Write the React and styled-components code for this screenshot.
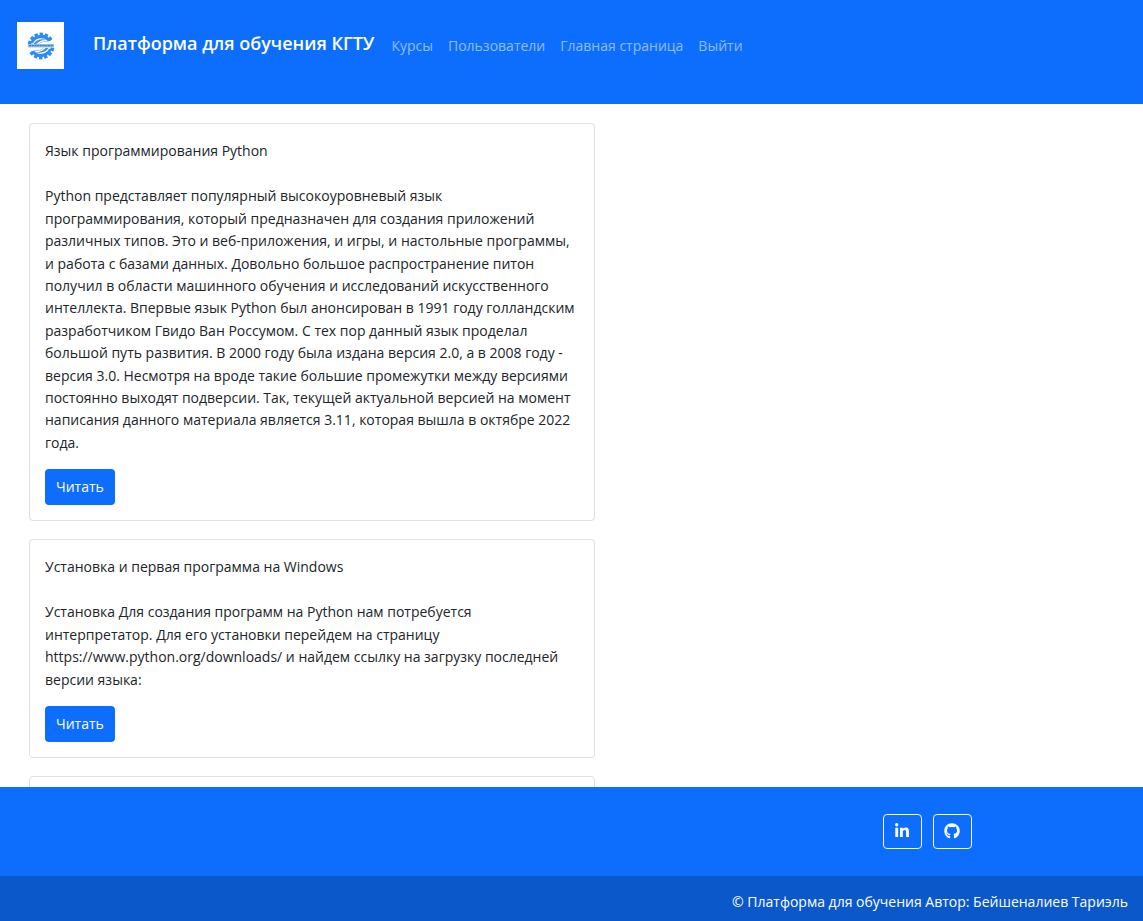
import React from "react";
import styled, { createGlobalStyle } from "styled-components";
import { FaLinkedinIn, FaGithub } from "react-icons/fa";

const GlobalStyle = createGlobalStyle`
  *, *::before, *::after { box-sizing: border-box; }
  body {
    margin: 0;
    background: #fff;
    color: #212529;
    font-family: "Segoe UI", "Open Sans", "Noto Sans", sans-serif;
    font-size: 14px;
    line-height: 1.6;
  }
  h1, h2, p { margin: 0; }
`;

const Page = styled.div`
  display: flex;
  flex-direction: column;
  height: 100vh;
`;

const Header = styled.header`
  display: flex;
  align-items: flex-start;
  padding: 22px 17px 35px;
  background: #0d6efd;
`;

const LogoLink = styled.a`
  display: flex;
  align-items: center;
  justify-content: center;
  width: 47px;
  height: 47px;
  margin-right: 29px;
  background: #fff;
`;

const Brand = styled.h1`
  margin-right: 17px;
  padding-top: 8px;
  color: #fff;
  font-size: 18px;
  font-weight: 600;
  line-height: 27px;
`;

const Nav = styled.nav`
  display: flex;
  gap: 15px;
  padding-top: 13px;
`;

const NavLink = styled.a`
  color: rgba(255, 255, 255, 0.55);
  text-decoration: none;
`;

const Main = styled.main`
  flex: 1;
  min-height: 0;
  overflow: hidden;
  padding: 19px 30px 0 29px;
`;

const CourseList = styled.div`
  display: flex;
  flex-direction: column;
  gap: 18px;
  width: calc(50% + 24px);
`;

const Card = styled.article`
  padding: 16px 15px 15px;
  border: 1px solid #dfdfdf;
  border-radius: 4px;
`;

const CardTitle = styled.h2`
  margin-bottom: 23px;
  font-size: 14px;
  font-weight: 400;
`;

const CardText = styled.p`
  margin-bottom: 15px;
`;

const ReadButton = styled.button`
  display: block;
  height: 36px;
  padding: 0 11px;
  border: 0;
  border-radius: 4px;
  background: #0d6efd;
  color: #fff;
  font: inherit;
  cursor: pointer;
`;

const Footer = styled.footer`
  background: #0d6efd;
  color: #fff;
`;

const Socials = styled.div`
  display: flex;
  justify-content: flex-end;
  gap: 11px;
  padding: 27px 15% 27px 0;
`;

const SocialLink = styled.a`
  display: flex;
  align-items: center;
  justify-content: center;
  width: 39px;
  height: 35px;
  border: 1px solid #f8f9fa;
  border-radius: 4px;
  color: #f8f9fa;
  font-size: 16px;
`;

const Copyright = styled.div`
  padding: 15px 15px 8px;
  background: #0b58ca;
  text-align: right;
`;

const teeth = [-164, -139, -114, -89, -64, -39];

function GearHalf() {
  return (
    <g>
      <path d="M3.2 11.2A11.2 11.2 0 0 1 23.8 8.6L21.2 9.6A9 9 0 0 0 6 11.2Z" fill="#2b8cf5" />
      {teeth.map((a) => (
        <rect key={a} x="24" y="12.4" width="3.4" height="3.4" fill="#2b8cf5" transform={`rotate(${a} 14 14)`} />
      ))}
      <path d="M6.5 12C9 8 14 6 20.5 8.2C15 7.5 11.5 9.5 9.5 12Z" fill="#4f8fc4" />
      <path d="M11.5 12C13.5 9.8 17 9 21 9.8" fill="none" stroke="#8bb9df" strokeWidth="0.8" />
    </g>
  );
}

function Logo() {
  return (
    <svg width="28" height="28" viewBox="0 0 28 28" aria-hidden="true">
      <GearHalf />
      <g transform="rotate(180 14 14)">
        <GearHalf />
      </g>
      <rect x="1" y="12" width="26" height="3.4" fill="#8fbce2" />
      <path d="M2 13.6H26" stroke="#3f7fb5" strokeWidth="1.4" strokeDasharray="2 0.7" />
    </svg>
  );
}

const links = ["Курсы", "Пользователи", "Главная страница", "Выйти"];

const courses = [
  {
    title: "Язык программирования Python",
    text: "Python представляет популярный высокоуровневый язык программирования, который предназначен для создания приложений различных типов. Это и веб-приложения, и игры, и настольные программы, и работа с базами данных. Довольно большое распространение питон получил в области машинного обучения и исследований искусственного интеллекта. Впервые язык Python был анонсирован в 1991 году голландским разработчиком Гвидо Ван Россумом. С тех пор данный язык проделал большой путь развития. В 2000 году была издана версия 2.0, а в 2008 году - версия 3.0. Несмотря на вроде такие большие промежутки между версиями постоянно выходят подверсии. Так, текущей актуальной версией на момент написания данного материала является 3.11, которая вышла в октябре 2022 года.",
  },
  {
    title: "Установка и первая программа на Windows",
    text: "Установка Для создания программ на Python нам потребуется интерпретатор. Для его установки перейдем на страницу https://www.python.org/downloads/ и найдем ссылку на загрузку последней версии языка:",
  },
];

export default function App() {
  return (
    <Page>
      <GlobalStyle />
      <Header>
        <LogoLink href="#" aria-label="КГТУ">
          <Logo />
        </LogoLink>
        <Brand>Платформа для обучения КГТУ</Brand>
        <Nav>
          {links.map((label) => (
            <NavLink key={label} href="#">{label}</NavLink>
          ))}
        </Nav>
      </Header>
      <Main>
        <CourseList>
          {courses.map(({ title, text }) => (
            <Card key={title}>
              <CardTitle>{title}</CardTitle>
              <CardText>{text}</CardText>
              <ReadButton type="button">Читать</ReadButton>
            </Card>
          ))}
          <Card />
        </CourseList>
      </Main>
      <Footer>
        <Socials>
          <SocialLink href="#" aria-label="LinkedIn"><FaLinkedinIn /></SocialLink>
          <SocialLink href="#" aria-label="GitHub"><FaGithub /></SocialLink>
        </Socials>
        <Copyright>© Платформа для обучения Автор: Бейшеналиев Тариэль</Copyright>
      </Footer>
    </Page>
  );
}
